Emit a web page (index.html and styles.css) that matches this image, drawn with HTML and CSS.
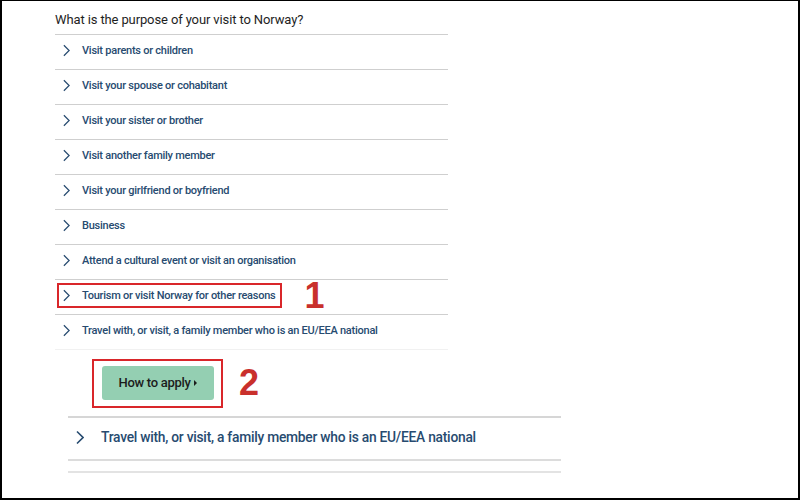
FILE: index.html
```html
<!DOCTYPE html>
<html lang="en">
<head>
    <meta charset="UTF-8">
    <title>Purpose of visit</title>
    <link rel="stylesheet" href="styles.css">
</head>
<body>
    <div class="frame">
        <h2 class="question">What is the purpose of your visit to Norway?</h2>
        <ul class="choices">
            <li><svg class="chev" viewBox="0 0 8 14"><polyline points="1,1 7,7 1,13"/></svg>Visit parents or children</li>
            <li><svg class="chev" viewBox="0 0 8 14"><polyline points="1,1 7,7 1,13"/></svg>Visit your spouse or cohabitant</li>
            <li><svg class="chev" viewBox="0 0 8 14"><polyline points="1,1 7,7 1,13"/></svg>Visit your sister or brother</li>
            <li><svg class="chev" viewBox="0 0 8 14"><polyline points="1,1 7,7 1,13"/></svg>Visit another family member</li>
            <li><svg class="chev" viewBox="0 0 8 14"><polyline points="1,1 7,7 1,13"/></svg>Visit your girlfriend or boyfriend</li>
            <li><svg class="chev" viewBox="0 0 8 14"><polyline points="1,1 7,7 1,13"/></svg>Business</li>
            <li><svg class="chev" viewBox="0 0 8 14"><polyline points="1,1 7,7 1,13"/></svg>Attend a cultural event or visit an organisation</li>
            <li class="picked">
                <span class="mark"><svg class="chev" viewBox="0 0 8 14"><polyline points="1,1 7,7 1,13"/></svg>Tourism or visit Norway for other reasons</span>
                <span class="step">1</span>
            </li>
            <li class="last"><svg class="chev" viewBox="0 0 8 14"><polyline points="1,1 7,7 1,13"/></svg>Travel with, or visit, a family member who is an EU/EEA national</li>
        </ul>

        <div class="apply-row">
            <div class="mark mark-btn">
                <button class="apply">How to apply <span class="tri"></span></button>
            </div>
            <span class="step">2</span>
        </div>

        <div class="more">
            <div class="more-row"><svg class="chev chev-lg" viewBox="0 0 8 14"><polyline points="1,1 7,7 1,13"/></svg>Travel with, or visit, a family member who is an EU/EEA national</div>
            <div class="more-empty"></div>
        </div>
    </div>
</body>
</html>
```

FILE: styles.css
```css
body {
    margin: 0;
    background-color: #fff;
    font-family: Roboto, "Liberation Sans", sans-serif;
}

.frame {
    width: 800px;
    height: 500px;
    box-sizing: border-box;
    border: 2px solid #000;
    border-top-width: 1px;
    padding-left: 53px;
    overflow: hidden;
}

.question {
    margin: 0;
    height: 33px;
    line-height: 37px;
    font-size: 13px;
    font-weight: normal;
    letter-spacing: -0.12px;
    color: #1e1e1e;
}

.choices {
    list-style: none;
    margin: 0;
    padding: 0;
    width: 393px;
}

.choices li {
    display: flex;
    align-items: center;
    box-sizing: border-box;
    height: 35px;
    padding-bottom: 3px;
    border-top: 1px solid #cfcfcf;
    font-size: 11px;
    font-weight: 500;
    letter-spacing: -0.25px;
    white-space: nowrap;
    color: #274b70;
}

.choices li.last {
    height: 36px;
    border-bottom: 1px solid #f1f1f1;
}

.chev {
    width: 7px;
    height: 13px;
    margin: 0 12px 0 8px;
    flex-shrink: 0;
    fill: none;
    stroke: #274b70;
    stroke-width: 1.4;
}

.mark {
    display: inline-flex;
    align-items: center;
    border: 2px solid #d9262a;
}

.picked .mark {
    height: 21px;
    padding-right: 5px;
    margin-left: 2px;
}

.picked .mark .chev {
    margin-left: 4px;
}

.step {
    font-family: "Liberation Sans", Arial, sans-serif;
    font-weight: bold;
    font-size: 36px;
    line-height: 30px;
    letter-spacing: 0;
    color: #c9302c;
    margin-left: 22px;
}

.apply-row {
    display: flex;
    align-items: center;
    height: 66px;
    padding-left: 37px;
}

.mark-btn {
    padding: 5px 7px 6px 8px;
}

.apply {
    width: 112px;
    height: 34px;
    border: none;
    border-radius: 3px;
    background-color: #94cfb2;
    font-family: Roboto, "Liberation Sans", sans-serif;
    font-size: 13px;
    font-weight: 500;
    letter-spacing: -0.3px;
    color: #1c1c1c;
}

.tri {
    display: inline-block;
    width: 0;
    height: 0;
    border-left: 3px solid #1c1c1c;
    border-top: 3px solid transparent;
    border-bottom: 3px solid transparent;
    margin-left: 1px;
    vertical-align: 1px;
}

.apply-row .step {
    margin-left: 16px;
}

.more {
    width: 493px;
    margin-left: 13px;
}

.more-row {
    display: flex;
    align-items: center;
    box-sizing: border-box;
    height: 45px;
    padding-bottom: 3px;
    border-top: 2px solid #d6d6d6;
    border-bottom: 2px solid #dcdcdc;
    font-size: 13.8px;
    font-weight: 500;
    letter-spacing: -0.25px;
    white-space: nowrap;
    color: #274b70;
}

.more-empty {
    height: 10px;
    border-bottom: 2px solid #e3e3e3;
}

.chev-lg {
    width: 8px;
    height: 15px;
    stroke-width: 1.6;
    margin: 0 17px 0 8px;
}
```
